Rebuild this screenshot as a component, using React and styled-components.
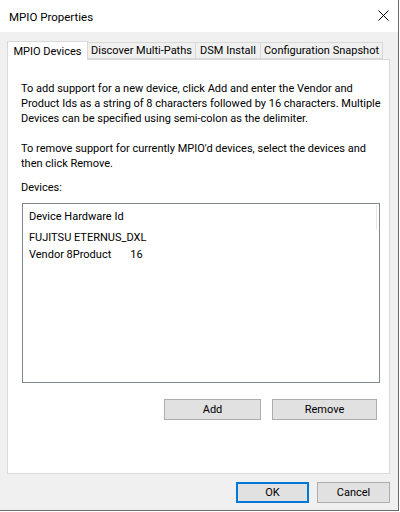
import styled, { createGlobalStyle } from 'styled-components';

const Global = createGlobalStyle`
  html, body {
    margin: 0;
    padding: 0;
    background: #ffffff;
  }
  body {
    font-family: Roboto, "Noto Sans", sans-serif;
    font-size: 11px;
    color: #000000;
  }
`;

const tabs = [
  { label: 'MPIO Devices', w: 81 },
  { label: 'Discover Multi-Paths', w: 109 },
  { label: 'DSM Install', w: 66 },
  { label: 'Configuration Snapshot', w: 123 },
];

export default function App() {
  return (
    <>
      <Global />
      <Window>
        <TitleBar>
          <Title>MPIO Properties</Title>
          <Close>
            <svg width="11" height="11" viewBox="0 0 11 11">
              <path d="M0.5 0.5 L10.5 10.5 M10.5 0.5 L0.5 10.5" stroke="#000" strokeWidth="1" />
            </svg>
          </Close>
        </TitleBar>
        <Body>
          <TabStrip>
            {tabs.map((t, i) => (
              <Tab key={t.label} active={i === 0} w={t.w}>
                {t.label}
              </Tab>
            ))}
          </TabStrip>
          <Panel>
            <Para mb={15}>
              To add support for a new device, click Add and enter the Vendor and
              <br />
              Product Ids as a string of 8 characters followed by 16 characters. Multiple
              <br />
              Devices can be specified using semi-colon as the delimiter.
            </Para>
            <Para mb={9}>
              To remove support for currently MPIO'd devices, select the devices and
              <br />
              then click Remove.
            </Para>
            <Label>Devices:</Label>
            <ListBox>
              <ListHeader>Device Hardware Id</ListHeader>
              <ListRow>FUJITSU ETERNUS_DXL</ListRow>
              <ListRow>Vendor 8Product       16</ListRow>
            </ListBox>
            <ButtonRow>
              <Button w={97}>Add</Button>
              <Button w={105}>Remove</Button>
            </ButtonRow>
          </Panel>
          <Footer>
            <Button w={73} primary>
              OK
            </Button>
            <Button w={73}>Cancel</Button>
          </Footer>
        </Body>
      </Window>
    </>
  );
}

const Window = styled.div`
  width: 398px;
  height: 510px;
  border-right: 1px solid #6b6b6b;
  border-bottom: 1px solid #6b6b6b;
  display: flex;
  flex-direction: column;
  background: #f0f0f0;
`;

const TitleBar = styled.div`
  height: 32px;
  background: #ffffff;
  display: flex;
  align-items: center;
  padding-left: 9px;
  padding-right: 9px;
`;

const Title = styled.div`
  flex: 1;
  font-size: 11.5px;
  margin-top: 1px;
`;

const Close = styled.div`
  display: flex;
  align-items: center;
  margin-top: -1px;
`;

const Body = styled.div`
  flex: 1;
  display: flex;
  flex-direction: column;
  padding: 9px 8px 0 7px;
`;

const TabStrip = styled.div`
  display: flex;
  align-items: flex-end;
  height: 18px;
  position: relative;
  z-index: 1;
`;

const Tab = styled.div`
  box-sizing: border-box;
  width: ${(p) => p.w}px;
  height: ${(p) => (p.active ? '19px' : '17px')};
  margin-bottom: ${(p) => (p.active ? '-1px' : '0')};
  background: ${(p) => (p.active ? '#ffffff' : '#f0f0f0')};
  border: 1px solid #d9d9d9;
  border-bottom: ${(p) => (p.active ? 'none' : '1px solid #d9d9d9')};
  margin-left: ${(p) => (p.active ? '0' : '-1px')};
  display: flex;
  align-items: center;
  justify-content: center;
  white-space: nowrap;
  line-height: 15px;
`;

const Panel = styled.div`
  box-sizing: border-box;
  width: 383px;
  height: 415px;
  background: #ffffff;
  border: 1px solid #d9d9d9;
  padding: 21px 11px 0 13px;
  display: flex;
  flex-direction: column;
`;

const Para = styled.p`
  margin: 0 0 ${(p) => p.mb}px 0;
  line-height: 15px;
  white-space: nowrap;
`;

const Label = styled.div`
  line-height: 15px;
  margin-bottom: 8px;
`;

const ListBox = styled.div`
  box-sizing: border-box;
  width: 358px;
  height: 180px;
  margin-left: 1px;
  border: 1px solid #828790;
  padding-top: 1px;
`;

const ListHeader = styled.div`
  width: 354px;
  height: 24px;
  padding-left: 6px;
  padding-bottom: 1px;
  box-sizing: border-box;
  border-right: 1px solid #e5e5e5;
  display: flex;
  align-items: center;
`;

const ListRow = styled.div`
  height: 17px;
  line-height: 17px;
  padding-left: 6px;
  white-space: pre;
`;

const ButtonRow = styled.div`
  display: flex;
  justify-content: flex-end;
  gap: 11px;
  margin-top: 16px;
  padding-right: 1px;
`;

const Button = styled.div`
  box-sizing: border-box;
  width: ${(p) => p.w}px;
  height: 21px;
  background: #e1e1e1;
  border: ${(p) => (p.primary ? '2px solid #0078d7' : '1px solid #adadad')};
  display: flex;
  align-items: center;
  justify-content: center;
`;

const Footer = styled.div`
  display: flex;
  justify-content: flex-end;
  gap: 8px;
  margin-top: 8px;
  padding-right: 0;
`;
